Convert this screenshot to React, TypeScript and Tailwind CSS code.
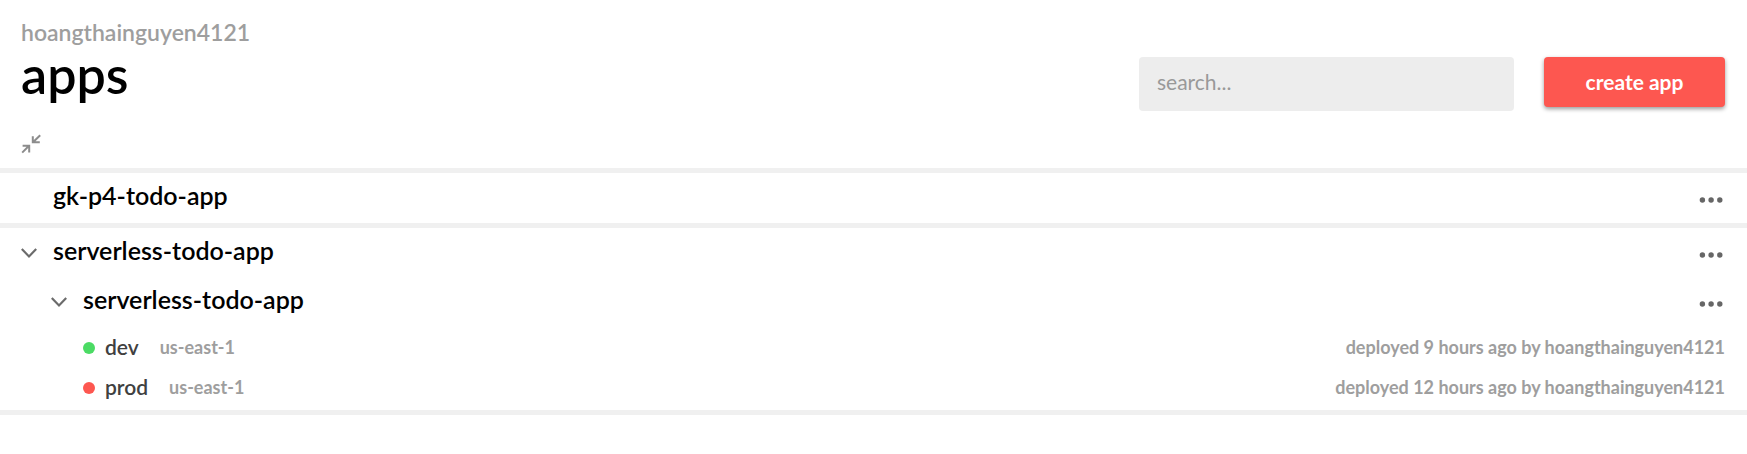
import { useState } from "react";

type Stage = { name: string; region: string; color: string; deployed: string };
type Service = { name: string; stages: Stage[] };
type AppEntry = { name: string; services: Service[] };

const owner = "hoangthainguyen4121";

const apps: AppEntry[] = [
  { name: "gk-p4-todo-app", services: [] },
  {
    name: "serverless-todo-app",
    services: [
      {
        name: "serverless-todo-app",
        stages: [
          { name: "dev", region: "us-east-1", color: "bg-[#4bdb64]", deployed: "9 hours ago" },
          { name: "prod", region: "us-east-1", color: "bg-[#fd5750]", deployed: "12 hours ago" },
        ],
      },
    ],
  },
];

function CollapseIcon() {
  return (
    <svg width="20" height="20" viewBox="0 0 20 20" fill="none" stroke="#8c8c8c" strokeWidth="2" aria-hidden="true">
      <path d="M19.2 1.2 12 8.2M11.8 2.2V8.2H18.8" />
      <path d="M1.2 18.6 8 11.8M1.6 11.8H8.2V18.6" />
    </svg>
  );
}

function Chevron() {
  return (
    <svg width="16" height="10" viewBox="0 0 16 10" fill="none" stroke="#6b6b6b" strokeWidth="2.2" aria-hidden="true">
      <path d="M.8 1 8 8.4 15.2 1" />
    </svg>
  );
}

function MoreButton({ label }: { label: string }) {
  return (
    <button type="button" aria-label={`Options for ${label}`} className="mt-1 flex h-6 w-[26px] items-center">
      <svg width="24" height="6" viewBox="0 0 24 6" fill="#666" aria-hidden="true">
        <circle cx="3.4" cy="3" r="2.7" />
        <circle cx="12.1" cy="3" r="2.7" />
        <circle cx="20.8" cy="3" r="2.7" />
      </svg>
    </button>
  );
}

function TreeRow({ name, expandable, open, onToggle }: { name: string; expandable: boolean; open: boolean; onToggle: () => void }) {
  return (
    <div className="flex h-[50px] items-center">
      <div className="w-8 shrink-0">
        {expandable && (
          <button type="button" aria-label={`Toggle ${name}`} aria-expanded={open} onClick={onToggle} className="flex h-6 w-4 items-center">
            <Chevron />
          </button>
        )}
      </div>
      <a href="#" className="pb-[6px] text-[25px] leading-8 font-semibold text-black">{name}</a>
      <div className="ml-auto">
        <MoreButton label={name} />
      </div>
    </div>
  );
}

function ServiceBlock({ service }: { service: Service }) {
  const [open, setOpen] = useState(true);
  return (
    <div className="pl-[30px]">
      <TreeRow name={service.name} expandable open={open} onToggle={() => setOpen(!open)} />
      {open && (
        <ul className="pl-8">
          {service.stages.map((stage) => (
            <li key={stage.name} className="flex h-10 items-center">
              <span className={`mt-[2px] mr-[10px] h-3 w-3 rounded-full ${stage.color}`} />
              <a href="#" className="text-[21px] leading-6 font-semibold text-[#404040]">{stage.name}</a>
              <span className="ml-[21px] text-lg leading-6 font-bold text-[#9e9e9e]">{stage.region}</span>
              <span className="ml-auto text-lg leading-6 font-bold text-[#9e9e9e]">
                deployed {stage.deployed} by {owner}
              </span>
            </li>
          ))}
        </ul>
      )}
    </div>
  );
}

function AppBlock({ app }: { app: AppEntry }) {
  const [open, setOpen] = useState(true);
  return (
    <section className="border-b-[5px] border-[#f0f0f0] pr-[22px] pl-[21px]">
      <TreeRow name={app.name} expandable={app.services.length > 0} open={open} onToggle={() => setOpen(!open)} />
      {open && app.services.length > 0 && (
        <div className="-mt-px pb-[3px]">
          {app.services.map((service) => (
            <ServiceBlock key={service.name} service={service} />
          ))}
        </div>
      )}
    </section>
  );
}

export default function App() {
  return (
    <main className="min-h-screen bg-white font-['Lato','Open_Sans',sans-serif]">
      <header className="flex items-start pt-[18px] pr-[22px] pl-[21px]">
        <div>
          <a href="#" className="block text-[23px] leading-7 font-semibold text-[#9e9e9e]">{owner}</a>
          <h1 className="text-[52px] leading-[56px] font-semibold text-black">apps</h1>
        </div>
        <div className="mt-[39px] ml-auto flex items-start gap-[30px]">
          <input
            type="search"
            aria-label="Search apps"
            placeholder="search..."
            className="h-[54px] w-[375px] rounded bg-[#ededed] px-[18px] pb-[6px] text-[21px] outline-none placeholder:text-[#999]"
          />
          <button type="button" className="h-[50px] w-[181px] rounded bg-[#fd5750] text-[21px] font-bold text-white shadow-[0_2px_4px_rgba(0,0,0,0.4)]">
            create app
          </button>
        </div>
      </header>
      <div className="flex h-[62px] items-end border-b-[5px] border-[#f0f0f0] px-[21px] pb-[14px]">
        <button type="button" aria-label="Collapse all">
          <CollapseIcon />
        </button>
      </div>
      {apps.map((app) => (
        <AppBlock key={app.name} app={app} />
      ))}
    </main>
  );
}
